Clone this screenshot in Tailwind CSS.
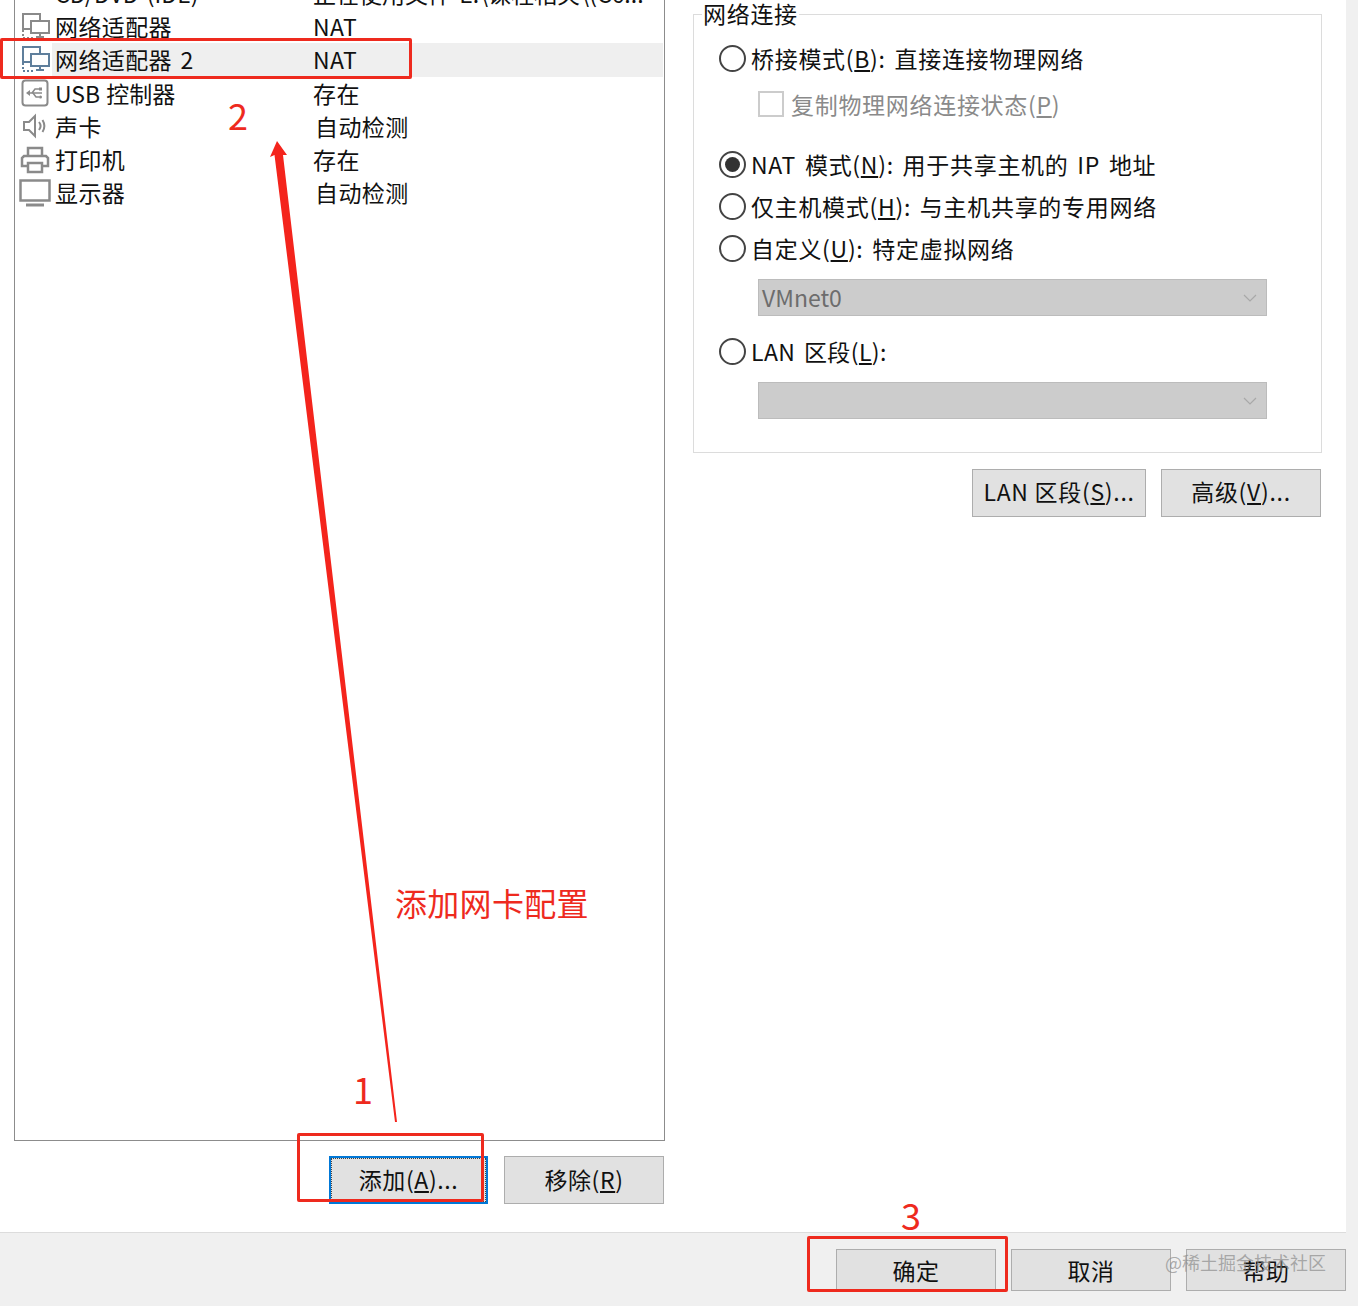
<!DOCTYPE html>
<html lang="zh-CN">
  <head>
    <meta charset="UTF-8" />
    <title>虚拟机设置</title>
    <script src="https://cdn.jsdelivr.net/npm/@tailwindcss/browser@4"></script>
  </head>
  <body class="relative h-[1306px] w-[1358px] overflow-hidden bg-[#f0f0f0] font-['Noto_Sans_CJK_SC',sans-serif] text-[23px] leading-none tracking-[0.6px] [word-spacing:3px] text-[#111]">
    <div class="flex h-[1233px] w-[1346px] border-b border-[#dcdcdc] bg-white">
      <!-- 硬件列表 -->
      <div class="ml-[14px] flex w-[651px] flex-col">
        <div class="h-[1141px] overflow-hidden border-x border-b border-[#8c8c8c] tracking-[0.4px]">
          <div class="-mt-[23px] flex flex-col">
            <div class="flex h-[33.2px] items-center tracking-normal">
              <div class="flex w-[40px] justify-center"></div>
              <span class="w-[258px]">CD/DVD (IDE)</span>
              <span>正在使用文件 E:\课程相关\(C6...</span>
            </div>
            <div class="flex h-[33.2px] items-center">
              <div class="flex w-[40px] justify-center">
                <svg width="30" height="30" viewBox="0 0 30 30" fill="none" stroke="#8a8a8a" stroke-width="2"><path d="M20 9V2H3v15h8"/><rect x="11" y="9" width="18" height="12"/><path d="M20 21v3M16 25h8"/><path d="M3 18v8h12" stroke-dasharray="2 2"/></svg>
              </div>
              <span class="w-[258px]">网络适配器</span>
              <span>NAT</span>
            </div>
            <div class="flex h-[33.2px] items-center">
              <div class="flex w-[37px] justify-center">
                <svg class="ml-[3px]" width="30" height="30" viewBox="0 0 30 30" fill="none" stroke="#5f7f9c" stroke-width="2"><path d="M20 9V2H3v15h8"/><rect x="11" y="9" width="18" height="12"/><path d="M20 21v3M16 25h8"/><path d="M3 18v8h12" stroke-dasharray="2 2"/></svg>
              </div>
              <div class="mr-[1px] flex h-full flex-1 items-center bg-[#efefef] pl-[3px]">
                <span class="w-[258px]">网络适配器 2</span>
                <span>NAT</span>
              </div>
            </div>
            <div class="flex h-[33.2px] items-center">
              <div class="flex w-[40px] justify-center">
                <svg width="28" height="28" viewBox="0 0 28 28" fill="none" stroke="#8a8a8a" stroke-width="2"><rect x="1.500" y="1.500" width="25" height="25" rx="3"/><path d="M8 14h13" stroke-width="1.500"/><path d="M5 14l4-3v6z" fill="#8a8a8a" stroke="none"/><path d="M11 14l3-4h4M12 14l3 4h3" stroke-width="1.500"/><rect x="18" y="8.500" width="3" height="3" fill="#8a8a8a" stroke="none"/><circle cx="19.500" cy="18" r="1.500" fill="#8a8a8a" stroke="none"/></svg>
              </div>
              <span class="w-[258px] tracking-normal [word-spacing:1px]">USB 控制器</span>
              <span>存在</span>
            </div>
            <div class="flex h-[33.2px] items-center">
              <div class="flex w-[40px] justify-center">
                <svg width="26" height="26" viewBox="0 0 26 26" fill="none" stroke="#8a8a8a" stroke-width="2"><path d="M2 9v8h5l6 6V3L7 9z"/><path d="M17 9c2 2.500 2 5.500 0 8M20.500 7c2.500 4 2.500 8 0 12"/></svg>
              </div>
              <span class="w-[258px]">声卡</span>
              <span class="pl-[2px]">自动检测</span>
            </div>
            <div class="flex h-[33.2px] items-center">
              <div class="flex w-[40px] justify-center">
                <svg width="30" height="28" viewBox="0 0 30 28" fill="none" stroke="#8a8a8a" stroke-width="2.500"><path d="M8 10V2h14v8"/><path d="M7 20H2v-8l2-2h22l2 2v8h-5"/><rect x="8" y="17" width="14" height="9"/></svg>
              </div>
              <span class="w-[258px]">打印机</span>
              <span>存在</span>
            </div>
            <div class="flex h-[33.2px] items-center">
              <div class="flex w-[40px] justify-center">
                <svg width="32" height="28" viewBox="0 0 32 28" fill="none" stroke="#8a8a8a" stroke-width="2.500"><rect x="1.500" y="1.500" width="29" height="20"/><path d="M7 26h18" stroke-width="3"/></svg>
              </div>
              <span class="w-[258px]">显示器</span>
              <span class="pl-[2px]">自动检测</span>
            </div>
          </div>
        </div>
        <div class="mt-[15px] flex justify-end gap-[16px] pr-[1px]">
          <button class="h-[48px] w-[159px] border-2 border-[#0078d7] bg-[#e1e1e1] pb-[2px] outline outline-dotted outline-[#444] -outline-offset-3">添加(<u>A</u>)...</button>
          <button class="h-[48px] w-[160px] border border-[#adadad] bg-[#e1e1e1] pb-[2px]">移除(<u>R</u>)</button>
        </div>
      </div>

      <!-- 网络连接 -->
      <div class="ml-[28px] flex w-[629px] flex-col pt-[14px] tracking-[0.7px]">
        <div class="relative flex h-[439px] flex-col border border-[#dcdcdc] pl-[25px]">
          <span class="absolute -top-[13px] left-[8px] bg-white px-[1px]">网络连接</span>
          <div class="mt-[22px] flex h-[42px] items-center gap-[5px]">
            <span class="h-[27px] w-[27px] rounded-full border-2 border-[#444]"></span>
            <span>桥接模式(<u>B</u>): 直接连接物理网络</span>
          </div>
          <div class="mt-[4px] ml-[39px] flex h-[42px] items-center gap-[7px] text-[#8a8a8a]">
            <span class="h-[26px] w-[26px] border-2 border-[#cccccc]"></span>
            <span>复制物理网络连接状态(<u>P</u>)</span>
          </div>
          <div class="mt-[18px] flex h-[42px] items-center gap-[5px]">
            <span class="flex h-[27px] w-[27px] items-center justify-center rounded-full border-2 border-[#444]"><span class="h-[15px] w-[15px] rounded-full bg-[#333]"></span></span>
            <span>NAT 模式(<u>N</u>): 用于共享主机的 IP 地址</span>
          </div>
          <div class="flex h-[42px] items-center gap-[5px]">
            <span class="h-[27px] w-[27px] rounded-full border-2 border-[#444]"></span>
            <span>仅主机模式(<u>H</u>): 与主机共享的专用网络</span>
          </div>
          <div class="flex h-[42px] items-center gap-[5px]">
            <span class="h-[27px] w-[27px] rounded-full border-2 border-[#444]"></span>
            <span>自定义(<u>U</u>): 特定虚拟网络</span>
          </div>
          <div class="mt-[10px] ml-[39px] flex h-[37px] w-[509px] items-center justify-between border border-[#bcbcbc] bg-[#cccccc] pr-[9px] pl-[3px] tracking-normal text-[#6d6d6d]">
            <span>VMnet0</span>
            <svg width="14" height="8" viewBox="0 0 14 8" fill="none" stroke="#a8a8a8" stroke-width="1.200"><path d="M1 1l6 6 6-6"/></svg>
          </div>
          <div class="mt-[14px] flex h-[42px] items-center gap-[5px]">
            <span class="h-[27px] w-[27px] rounded-full border-2 border-[#444]"></span>
            <span class="tracking-[0.4px]">LAN 区段(<u>L</u>):</span>
          </div>
          <div class="mt-[10px] ml-[39px] flex h-[37px] w-[509px] items-center justify-end border border-[#bcbcbc] bg-[#cccccc] pr-[9px]">
            <svg width="14" height="8" viewBox="0 0 14 8" fill="none" stroke="#a8a8a8" stroke-width="1.200"><path d="M1 1l6 6 6-6"/></svg>
          </div>
        </div>
        <div class="mt-[16px] flex justify-end gap-[15px] pr-[1px]">
          <button class="h-[48px] w-[174px] border border-[#adadad] bg-[#e1e1e1] pb-[3px]">LAN 区段(<u>S</u>)...</button>
          <button class="h-[48px] w-[160px] border border-[#adadad] bg-[#e1e1e1] pb-[3px]">高级(<u>V</u>)...</button>
        </div>
      </div>
    </div>

    <!-- 底部按钮 -->
    <div class="mt-[16px] flex w-[1346px] justify-end gap-[15px]">
      <button class="h-[42px] w-[160px] border border-[#adadad] bg-[#e1e1e1]">确定</button>
      <button class="h-[42px] w-[160px] border border-[#adadad] bg-[#e1e1e1]">取消</button>
      <button class="h-[42px] w-[160px] border border-[#adadad] bg-[#e1e1e1]">帮助</button>
    </div>

    <!-- 红色标注 -->
    <div class="absolute top-[38px] left-0 h-[41px] w-[412px] rounded-[2px] border-[3px] border-[#ee2a1e]"></div>
    <div class="absolute top-[1133px] left-[297px] h-[69px] w-[187px] rounded-[2px] border-[3px] border-[#ee2a1e]"></div>
    <div class="absolute top-[1236px] left-[807px] h-[56px] w-[201px] rounded-[2px] border-[3px] border-[#ee2a1e]"></div>
    <svg class="absolute top-0 left-0" width="1358" height="1306" fill="#f4241c"><polygon points="277,141 287,155 283,155 397,1122 395,1122 274.500,155 270,157"/></svg>
    <span class="absolute top-[96px] left-[228px] text-[36px] text-[#ee2a1e]">2</span>
    <span class="absolute top-[1070px] left-[353px] text-[36px] text-[#ee2a1e]">1</span>
    <span class="absolute top-[1196px] left-[901px] text-[36px] text-[#ee2a1e]">3</span>
    <span class="absolute top-[886px] left-[395px] text-[32px] tracking-[0.3px] text-[#ee2a1e]">添加网卡配置</span>
    <span class="absolute top-[1253px] left-[1165px] text-[18px] tracking-normal text-[#8c8c8c]/70">@稀土掘金技术社区</span>
  </body>
</html>
